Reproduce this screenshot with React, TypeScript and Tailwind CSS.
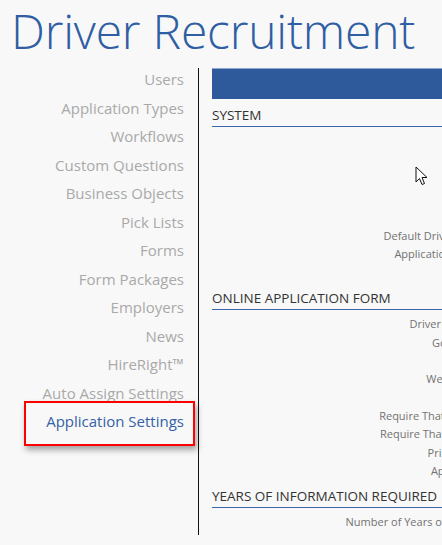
import React from "react";

const NAV_ITEMS = [
  "Users",
  "Application Types",
  "Workflows",
  "Custom Questions",
  "Business Objects",
  "Pick Lists",
  "Forms",
  "Form Packages",
  "Employers",
  "News",
  "HireRight™",
  "Auto Assign Settings",
  "Application Settings",
];

const ACTIVE = "Application Settings";

function SectionHeading({ title }: { title: string }) {
  return (
    <div className="border-b-[1.5px] border-[#3b66a8] pb-[1px] text-[13.5px] leading-[19px] text-[#333]">
      {title}
    </div>
  );
}

function FieldRow({ label }: { label: string }) {
  return (
    <div className="flex h-[18.3px] items-center">
      <div className="w-[278px] shrink-0 text-right text-[11px] text-[#727272]">{label}</div>
      <div className="flex-1" />
    </div>
  );
}

function Cursor() {
  return (
    <svg
      className="absolute left-[415px] top-[166px]"
      width="14"
      height="21"
      viewBox="0 0 14 21"
    >
      <path
        d="M1 1 L1 16 L4.5 12.5 L7 18.5 L9.5 17.5 L7 11.5 L12 11.5 Z"
        fill="#fff"
        stroke="#111"
        strokeWidth="1"
        strokeLinejoin="round"
      />
    </svg>
  );
}

export default function App() {
  return (
    <div
      className="relative h-[545px] w-[442px] overflow-hidden bg-[#f8f8f8]"
      style={{ fontFamily: '"Open Sans", "Noto Sans", sans-serif' }}
    >
      <header className="h-[68px] pl-[11px]">
        <h1 className="text-[48px] font-light leading-[62px] tracking-[-0.2px] text-[#2f5ea3]">
          Driver Recruitment
        </h1>
      </header>

      <div className="flex">
        <aside className="relative h-[467px] w-[199px] shrink-0 border-r border-[#111]">
          <ul className="-mt-[3px] pr-[14px] text-right text-[15px]">
            {NAV_ITEMS.map((item) => (
              <li
                key={item}
                className={
                  "flex h-[28.5px] items-center justify-end " +
                  (item === ACTIVE ? "text-[#3460a6]" : "text-[#a9a9a9]")
                }
              >
                {item}
              </li>
            ))}
          </ul>
          <div className="absolute left-[24px] top-[333px] h-[45px] w-[171px] border-2 border-[#f00] shadow-[2px_4px_6px_rgba(0,0,0,0.35)]" />
        </aside>

        <main className="w-[620px] shrink-0 pl-[13px]">
          <div className="h-[31px] border-t border-[#8ea6cf] bg-[#2e5a9c]" />

          <div className="pt-[7px]">
            <SectionHeading title="SYSTEM" />
          </div>
          <div className="h-[100px]" />
          <FieldRow label="Default Driver Status" />
          <FieldRow label="Application Source" />
          <div className="h-[25px]" />

          <SectionHeading title="ONLINE APPLICATION FORM" />
          <div className="pt-[6px]">
            <FieldRow label="Driver Licenses:" />
            <FieldRow label="Go To Page" />
            <FieldRow label="" />
            <FieldRow label="Web Header" />
            <FieldRow label="" />
            <FieldRow label="Require That Consent" />
            <FieldRow label="Require That Address" />
            <FieldRow label="Print Button" />
            <FieldRow label="Apply Label" />
          </div>
          <div className="h-[7px]" />

          <SectionHeading title="YEARS OF INFORMATION REQUIRED" />
          <div className="pt-[5px]">
            <FieldRow label="Number of Years of Address" />
          </div>
        </main>
      </div>

      <Cursor />
    </div>
  );
}
